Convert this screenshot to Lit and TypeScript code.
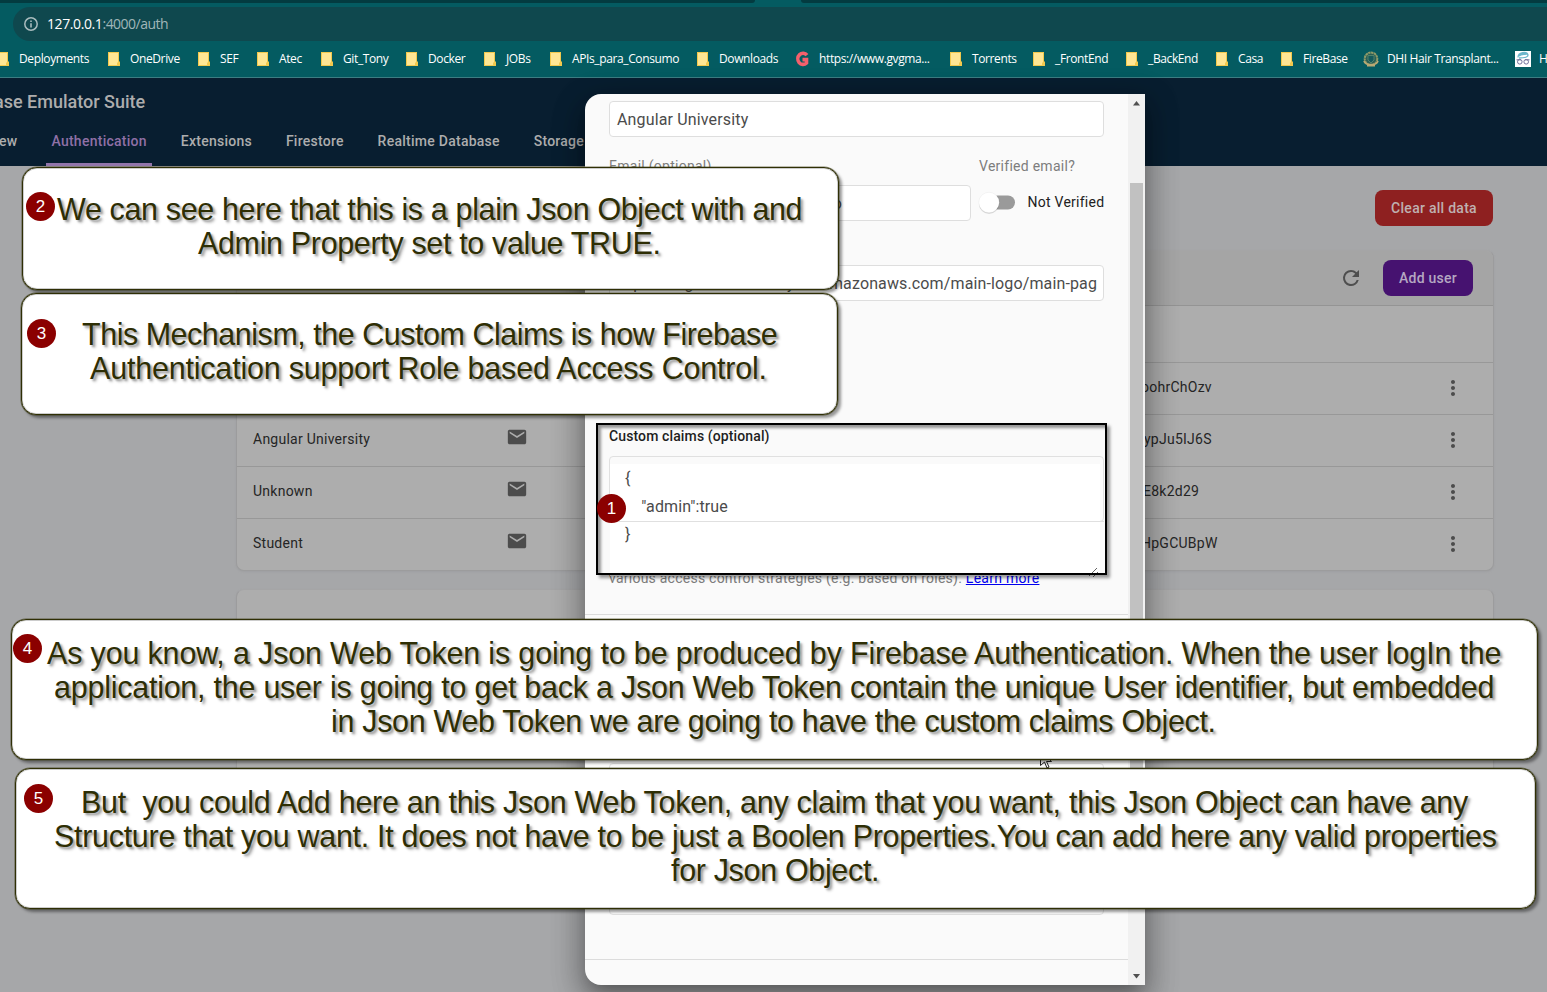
import { LitElement, html, css } from "lit";
import { customElement } from "lit/decorators.js";

type Mark = { kind: string; label: string; width: number };

const MARKS: Mark[] = [
  { kind: "folder", label: "Deployments", width: 111 },
  { kind: "folder", label: "OneDrive", width: 90 },
  { kind: "folder", label: "SEF", width: 59 },
  { kind: "folder", label: "Atec", width: 64 },
  { kind: "folder", label: "Git_Tony", width: 85 },
  { kind: "folder", label: "Docker", width: 78 },
  { kind: "folder", label: "JOBs", width: 66 },
  { kind: "folder", label: "APIs_para_Consumo", width: 147 },
  { kind: "folder", label: "Downloads", width: 100 },
  { kind: "g", label: "https://www.gvgma...", width: 153 },
  { kind: "folder", label: "Torrents", width: 83 },
  { kind: "folder", label: "_FrontEnd", width: 93 },
  { kind: "folder", label: "_BackEnd", width: 90 },
  { kind: "folder", label: "Casa", width: 65 },
  { kind: "folder", label: "FireBase", width: 86 },
  { kind: "crest", label: "DHI Hair Transplant...", width: 152 },
  { kind: "face", label: "H", width: 60 },
];

const folder = html`<svg width="12" height="14" viewBox="0 0 12 14"><path d="M0 0h11v9.500h1V14H0z" fill="#f2c94e"/><path d="M1 1h9v9.500h-1V13H1z" fill="#ffe694"/></svg>`;
const gIcon = html`<svg width="14" height="16" viewBox="0 0 14 16"><path d="M12 4.200A5.200 5.600 0 1 0 11.500 12V8.600H7.500" fill="none" stroke="#f4606c" stroke-width="3.600"/></svg>`;
const crest = html`<svg width="16" height="16" viewBox="0 0 16 16"><circle cx="8" cy="7.800" r="6.300" fill="#2a5f56" stroke="#8f9a68" stroke-width="2" stroke-dasharray="2.400 .5"/><path d="M5 4.500h6V9l-3 3-3-3z" fill="#155a5c" stroke="#5d8a70" stroke-width=".8"/><path d="M1 10c2 5 12 5 14 0M4 14.500h8" fill="none" stroke="#b9a974" stroke-width="1.800"/></svg>`;
const face = html`<svg width="16" height="16" viewBox="0 0 16 16"><path d="M0 0h16v16H0z" fill="#fff"/><path d="M3 6.500C3 1 12 0 13 4c0 2-3 3-9 3M4 5c3-3 6-1 8-2M5 3c2-1 4-1 6-1" fill="none" stroke="#6cb7cb" stroke-width="1.300"/><circle cx="4.800" cy="10.800" r="2.300" fill="none" stroke="#74729c"/><circle cx="11.200" cy="10.800" r="2.300" fill="none" stroke="#74729c"/><path d="M1.500 8.800h4.500M10 8.800h4.500" stroke="#74729c"/></svg>`;
const icons: Record<string, unknown> = { folder, g: gIcon, crest, face };

const mail = html`<svg class="mail" width="22" height="22" viewBox="0 0 24 24"><path fill="#4c4c4c" d="M20 4H4c-1.100 0-1.990.9-1.990 2L2 18c0 1.100.9 2 2 2h16c1.100 0 2-.9 2-2V6c0-1.100-.9-2-2-2zm0 4l-8 5-8-5V6l8 5 8-5v2z"/></svg>`;
const dots = html`<svg class="dots" width="24" height="24" viewBox="0 0 24 24"><path fill="#4c4c4c" d="M12 8c1.100 0 2-.9 2-2s-.9-2-2-2-2 .9-2 2 .9 2 2 2zm0 2c-1.100 0-2 .9-2 2s.9 2 2 2 2-.9 2-2-.9-2-2-2zm0 6c-1.100 0-2 .9-2 2s.9 2 2 2 2-.9 2-2-.9-2-2-2z"/></svg>`;

@customElement("browser-chrome")
class BrowserChrome extends LitElement {
  static styles = css`
    :host { display: block; height: 78px; overflow: hidden; background: #045b61; box-sizing: border-box; border-bottom: 1px solid #3c7d82; color: #fff; font-family: "Open Sans", "Noto Sans", sans-serif; }
    .tabs { height: 3px; display: flex; gap: 46px; }
    .tabs i { background: #033b40; flex: none; width: 755px; border-radius: 0 0 4px 0; }
    .tabs i + i { flex: 1; border-radius: 0 0 0 4px; }
    .url { margin: 4px 0 0 13px; height: 34px; border-radius: 17px 0 0 17px; background: #0f484e; display: flex; align-items: center; padding-left: 11px; font-size: 14px; color: #a0b6b8; }
    .url svg { margin-right: 9px; }
    .url span { letter-spacing: -0.52px; line-height: 34px; }
    .url b { font-weight: 400; color: #fff; letter-spacing: -0.4px; }
    .marks { display: flex; margin-left: -3px; height: 36px; align-items: center; }
    .mark { flex: none; display: flex; align-items: center; height: 36px; font-size: 12px; line-height: 16px; letter-spacing: -0.38px; white-space: nowrap; }
    .mark .ic { width: 22px; flex: none; display: flex; }
    .mark .g { width: 24px; margin-left: -2px; }
    .mark .crest { width: 24px; margin-left: -4px; }
    .mark .face { width: 24px; margin-left: -4px; }
    .name { padding-bottom: 1px; }
  `;
  render() {
    return html`
      <div class="tabs"><i></i><i></i></div>
      <div class="url">
        <svg width="14" height="14" viewBox="0 0 14 14"><circle cx="7" cy="7" r="6.200" fill="none" stroke="#a9bcbe" stroke-width="1.500"/><path d="M7 6.200V10.400M7 3.500V5" stroke="#a9bcbe" stroke-width="1.600"/></svg>
        <span><b>127.0.0.1</b>:4000/auth</span>
      </div>
      <div class="marks">${MARKS.map((m) => html`<div class="mark" style="width:${m.width}px"><span class="ic ${m.kind}">${icons[m.kind]}</span><span class="name">${m.label}</span></div>`)}</div>
    `;
  }
}

@customElement("emulator-page")
class EmulatorPage extends LitElement {
  static styles = css`
    :host { display: block; height: 914px; overflow: hidden; background: #a6a7a9; font-family: Roboto, sans-serif; }
    header { height: 88px; background: #081e30; color: #adadad; overflow: hidden; font-weight: 500; white-space: nowrap; }
    .brand { height: 48px; line-height: 48px; font-size: 18px; margin-left: -6px; }
    .nav { display: flex; height: 40px; line-height: 31px; font-size: 14px; letter-spacing: 0.26px; }
    .tab { padding-right: 33.800px; }
    .on { color: #8f70a6; padding: 0 5px; margin: 0 29px 0 1px; height: 37px; border-bottom: 3px solid #9275ab; }
    .ov { padding-right: 28px; margin-left: -1px; }
    main { padding: 24px 53px 0 236px; }
    .clear { width: 118px; height: 36px; border-radius: 8px; background: #8e2020; color: #bfb0b0; font: 500 14px/36px Roboto, sans-serif; letter-spacing: 0.27px; text-align: center; margin: 0 1px 0 auto; }
    .card { margin-top: 24px; border-radius: 8px; background: #adadad; border: 1px solid #9c9c9d; border-top-color: #a5a5a6; overflow: hidden; color: #252525; box-shadow: 0 1px 2px #8f909255; }
    .bar { height: 54px; background: #a5a5a5; border-bottom: 1px solid #949494; display: flex; align-items: center; justify-content: flex-end; padding-right: 20px; gap: 20px; }
    .add { width: 90px; height: 36px; border-radius: 8px; background: #461270; color: #b5a7c2; font: 500 14px/36px Roboto, sans-serif; text-align: center; letter-spacing: 0.27px; }
    .hrow { height: 56px; border-bottom: 1px solid #989898; }
    .row { height: 51px; border-bottom: 1px solid #989898; display: grid; grid-template-columns: 253px 638px 1fr 52px; align-items: center; font-size: 14px; line-height: 20px; letter-spacing: 0.25px; padding-left: 16px; }
    .row:last-child { border-bottom: 0; }
    .cell { white-space: nowrap; padding-bottom: 3px; }
    .mail { display: block; margin-bottom: 8px; }
    .dots { display: block; margin-bottom: 2px; }
    .next { height: 230px; margin-top: 18px; }
  `;
  render() {
    const rows: [string, string, number][] = [["", "oohrChOzv", -3], ["Angular University", "ypJu5IJ6S", 0], ["Unknown", "E8k2d29", -1], ["Student", "HpGCUBpW", -3]];
    return html`
      <header>
        <div class="brand">ase Emulator Suite</div>
        <div class="nav"><span class="ov">ew</span><span class="on">Authentication</span><span class="tab">Extensions</span><span class="tab">Firestore</span><span class="tab">Realtime Database</span><span>Storage</span></div>
      </header>
      <main>
        <div class="clear">Clear all data</div>
        <section class="card">
          <div class="bar">
            <svg width="24" height="24" viewBox="0 0 24 24"><path fill="#4f4f4f" d="M17.650 6.350A7.958 7.958 0 0 0 12 4a8 8 0 1 0 7.730 10h-2.080A5.990 5.990 0 0 1 12 18a6 6 0 1 1 0-12c1.660 0 3.140.690 4.220 1.780L13 11h7V4z"/></svg>
            <div class="add">Add user</div>
          </div>
          <div class="hrow"></div>
          ${rows.map((r) => html`<div class="row"><span class="cell">${r[0]}</span><span>${mail}</span><span class="cell" style="margin-left:${r[2]}px">${r[1]}</span>${dots}</div>`)}
        </section>
        <section class="card next"></section>
      </main>`;
  }
}

@customElement("user-dialog")
class UserDialog extends LitElement {
  static styles = css`
    :host { display: flex; width: 560px; height: 891px; background: #fafafa; border-radius: 16px 0 0 16px; overflow: hidden; font-family: Roboto, sans-serif; box-shadow: 0 11px 15px -7px #0003, 0 12px 30px 3px #0004, 0 9px 30px 8px #0002; }
    .body { width: 543px; box-sizing: border-box; padding-top: 7px; }
    .pad { padding: 0 24px; }
    .input { box-sizing: border-box; height: 36px; line-height: 35px; border: 1px solid #dedede; border-radius: 4px; background: #fff; font-size: 16px; letter-spacing: 0.15px; color: #4b4b4b; padding: 0 7px; white-space: nowrap; overflow: hidden; }
    .email { display: grid; grid-template-columns: 362px 1fr; column-gap: 8px; padding-top: 19px; }
    .label { color: #7d7d7d; font-size: 14px; line-height: 20px; letter-spacing: 0.27px; height: 29px; }
    .email .input { text-align: right; padding-right: 128px; }
    .switch { display: flex; align-items: center; gap: 12.500px; font-size: 14px; letter-spacing: 0.25px; color: #212121; white-space: nowrap; height: 34px; }
    .url { margin-top: 44px; direction: rtl; padding-right: 6px; letter-spacing: 0.13px; }
    .claims { margin-top: 126px; font-size: 14px; line-height: 18px; font-weight: 500; color: #1e1e1e; letter-spacing: 0.12px; height: 29px; }
    .area { height: 66px; box-sizing: border-box; border: 1px solid #e0e0e0; border-radius: 4px; padding-top: 7px; }
    .code { height: 112px; width: 490px; background: #fff; box-sizing: border-box; padding: 0.500px 0 0 15px; margin: 0; font: 16px/28px Roboto, sans-serif; letter-spacing: 0.1px; color: #4b4b4b; white-space: pre; position: relative; }
    .edge { border-bottom: 1px solid #e0e0e0; height: 0; margin: -1px 0 0; position: relative; }
    .code svg { position: absolute; right: 2px; bottom: -1px; }
    .hint { font-size: 14px; line-height: 20px; letter-spacing: 0.24px; color: #7d7d7d; margin-top: 46px; white-space: nowrap; }
    .hint a { color: #0000ee; text-decoration: underline; letter-spacing: 0.28px; }
    .line { border-top: 1px solid #dcdcdc; margin-top: 26px; }
    .big { height: 152px; margin: 148px 24px 0; border: 1px solid #e0e0e0; box-sizing: border-box; border-radius: 4px; }
    .last { margin-top: 44px; }
    .scroll { width: 17px; background: #f1f1f1; display: flex; flex-direction: column; align-items: center; padding: 7px 0 6px; box-sizing: border-box; }
    .thumb { width: 13px; height: 660px; background: #c1c1c1; margin: 77px 0 auto; }
  `;
  render() {
    return html`
      <div class="body">
        <div class="pad">
          <div class="input">Angular University</div>
          <div class="email">
            <div><div class="label">Email (optional)</div><div class="input">university.io</div></div>
            <div><div class="label">Verified email?</div><div class="switch">
              <svg width="36" height="26" viewBox="0 0 36 26" overflow="visible"><rect x="2" y="6.500" width="34" height="14" rx="7" fill="#9a9a9a"/><circle cx="10" cy="15" r="10" fill="#0002"/><circle cx="10" cy="13.500" r="10.200" fill="#fff" stroke="#0001" stroke-width=".6"/></svg>
              <span>Not Verified</span></div></div>
          </div>
          <div class="input url">https://angular-university.s3.amazonaws.com/main-logo/main-pag</div>
          <div class="claims">Custom claims (optional)</div>
          <div class="area"><pre class="code">{
    "admin":true
}<svg width="9" height="9" viewBox="0 0 9 9"><path d="M0 8L8 0M4 9L9 4" stroke="#555" stroke-width=".9"/></svg></pre></div>
          <div class="edge"></div>
          <div class="hint">various access control strategies (e.g. based on roles). <a>Learn more</a></div>
        </div>
        <div class="line"></div>
        <div class="big"></div>
        <div class="line last"></div>
      </div>
      <div class="scroll">
        <svg width="7" height="5" viewBox="0 0 7 5"><path d="M3.500 0L7 4.500H0z" fill="#505050"/></svg>
        <div class="thumb"></div>
        <svg width="7" height="5" viewBox="0 0 7 5"><path d="M3.500 4.500L7 0H0z" fill="#505050"/></svg>
      </div>`;
  }
}

type Note = { n: number; x: number; y: number; w: number; h: number; bx: number; by: number; pad: number; lines: { t: string; x: number; s: number }[] };
const NOTES: Note[] = [
  { n: 2, x: 22, y: 167, w: 817, h: 123, bx: 4, by: 25, pad: 25, lines: [
    { t: "We can see here that this is a plain Json Object with and", x: 57, s: -0.36 },
    { t: "Admin Property set to value TRUE.", x: 198, s: -0.35 }] },
  { n: 3, x: 21, y: 293, w: 817, h: 122, bx: 6, by: 26, pad: 24, lines: [
    { t: "This Mechanism, the Custom Claims is how Firebase", x: 82, s: -0.48 },
    { t: "Authentication support Role based Access Control.", x: 90, s: -0.2 }] },
  { n: 4, x: 11, y: 619, w: 1527, h: 141, bx: 2, by: 15, pad: 17, lines: [
    { t: "As you know, a Json Web Token is going to be produced by Firebase Authentication. When the user logIn the", x: 47, s: -0.17 },
    { t: "application, the user is going to get back a Json Web Token contain the unique User identifier, but embedded", x: 54, s: -0.25 },
    { t: "in Json Web Token we are going to have the custom claims Object.", x: 331, s: -0.33 }] },
  { n: 5, x: 15, y: 768, w: 1521, h: 141, bx: 9, by: 16, pad: 17, lines: [
    { t: "But  you could Add here an this Json Web Token, any claim that you want, this Json Object can have any", x: 81, s: -0.27 },
    { t: "Structure that you want. It does not have to be just a Boolen Properties.You can add here any valid properties", x: 54, s: -0.3 },
    { t: "for Json Object.", x: 671, s: -0.34 }] },
];

@customElement("app-root")
class AppRoot extends LitElement {
  static styles = css`
    :host { display: block; position: relative; width: 1547px; height: 992px; overflow: hidden; }
    user-dialog { position: absolute; left: 585px; top: 94px; }
    .frame { position: absolute; left: 596px; top: 423px; width: 511px; height: 152px; box-sizing: border-box; border: 2px solid #000; box-shadow: 3px 3px 3px #0006, inset 3px 3px 3px #0006; }
    .cursor { position: absolute; left: 1040px; top: 749px; }
    .note { position: absolute; box-sizing: border-box; background: #fff; border: 1px solid #2f2f05; border-radius: 15px; box-shadow: 0 0 0 0.500px #2f2f0599, 3px 3px 3px #0006, inset 0 0 0 1px #aaa9; }
    .text { display: flex; flex-direction: column; font: 30.500px/34px "Liberation Sans", Arial, sans-serif; color: #2e2e04; text-shadow: 2px 2px 2px #0004, 3px 3px 3px #0003; }
    .text span { white-space: pre; }
    .dot { position: absolute; width: 29px; height: 29px; border-radius: 50%; background: #8b0000; color: #fff; font: 17px/29px "Liberation Sans", Arial, sans-serif; text-align: center; }
    .one { left: 597px; top: 494px; }
  `;
  render() {
    return html`
      <browser-chrome></browser-chrome>
      <emulator-page></emulator-page>
      <user-dialog></user-dialog>
      <div class="frame"></div>
      <div class="dot one">1</div>
      <svg class="cursor" width="14" height="20" viewBox="0 0 14 20"><path d="M.5 1v15.500l4-3.500 2.500 6 2-1-2.500-5.500h5z" fill="#fff" stroke="#222"/></svg>
      ${NOTES.map((n) => html`
        <div class="note" style="left:${n.x}px;top:${n.y}px;width:${n.w}px;height:${n.h}px">
          <div class="text" style="padding-top:${n.pad - 1}px">${n.lines.map((l) => html`<span style="margin-left:${l.x - n.x - 1}px;letter-spacing:${l.s}px">${l.t}</span>`)}</div>
          <div class="dot" style="left:${n.bx - 1}px;top:${n.by - 1}px">${n.n}</div>
        </div>`)}
    `;
  }
}
